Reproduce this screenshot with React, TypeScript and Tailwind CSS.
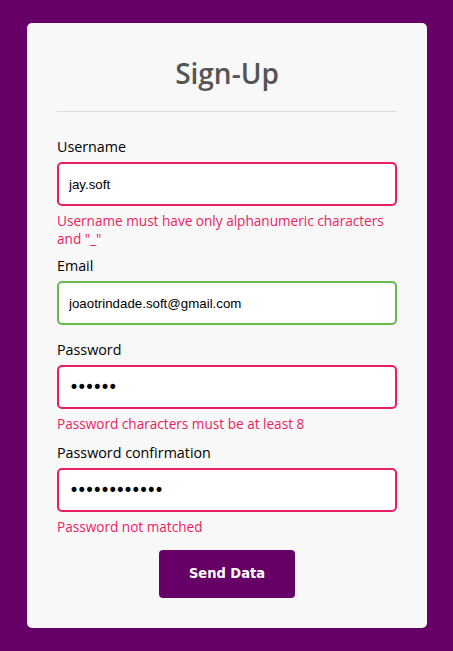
import React from "react";

const labelCls = "block text-[14.3px] leading-[20px] text-black";
const inputBase =
  "w-full h-[44px] rounded-[5px] border-2 bg-white px-[10px] text-black outline-none";
const errCls = "text-[13.6px] leading-[18px] text-[#e91e63]";

export default function App() {
  return (
    <div
      className="min-h-[651px] w-full bg-[#660066] pt-[23px] pb-[23px]"
      style={{ fontFamily: '"Open Sans", sans-serif' }}
    >
      <div className="mx-[27px] w-[400px] rounded-[5px] bg-[#f8f8f8] px-[30px] pt-[30px] pb-[30px]">
        <h1 className="text-center text-[28px] leading-[40px] font-semibold text-[#555555]">
          Sign-Up
        </h1>
        <div className="mt-[18px] h-px bg-[#dddddd]" />

        <div className="mt-[25px]">
          <label className={labelCls}>Username</label>
          <input
            className={`${inputBase} mt-[5px] border-[#e91e63] text-[13.3px]`}
            style={{ fontFamily: '"Liberation Sans", Arial, sans-serif' }}
            defaultValue="jay.soft"
          />
          <p className={`mt-[6px] ${errCls}`}>
            Username must have only alphanumeric characters and "_"
          </p>
        </div>

        <div className="mt-[8px]">
          <label className={labelCls}>Email</label>
          <input
            className={`${inputBase} mt-[5px] border-[#66bb4c] text-[13.3px]`}
            style={{ fontFamily: '"Liberation Sans", Arial, sans-serif' }}
            defaultValue="joaotrindade.soft@gmail.com"
          />
        </div>

        <div className="mt-[15px]">
          <label className={labelCls}>Password</label>
          <input
            type="password"
            className={`${inputBase} mt-[5px] border-[#e91e63] text-[17px] tracking-[-2.3px]`}
            style={{ fontFamily: '"DejaVu Sans", sans-serif' }}
            defaultValue="123456"
          />
          <p className={`mt-[6px] ${errCls}`}>Password characters must be at least 8</p>
        </div>

        <div className="mt-[10px]">
          <label className={labelCls}>Password confirmation</label>
          <input
            type="password"
            className={`${inputBase} mt-[5px] border-[#e91e63] text-[17px] tracking-[-2.3px]`}
            style={{ fontFamily: '"DejaVu Sans", sans-serif' }}
            defaultValue="123456789012"
          />
          <p className={`mt-[6px] ${errCls}`}>Password not matched</p>
        </div>

        <div className="mt-[14px] flex justify-center">
          <button
            className="h-[48px] w-[136px] rounded-[4px] bg-[#660066] text-[14.5px] font-bold text-white"
            style={{ fontFamily: '"DejaVu Sans Condensed", "DejaVu Sans", sans-serif' }}
          >
            Send Data
          </button>
        </div>
      </div>
    </div>
  );
}
